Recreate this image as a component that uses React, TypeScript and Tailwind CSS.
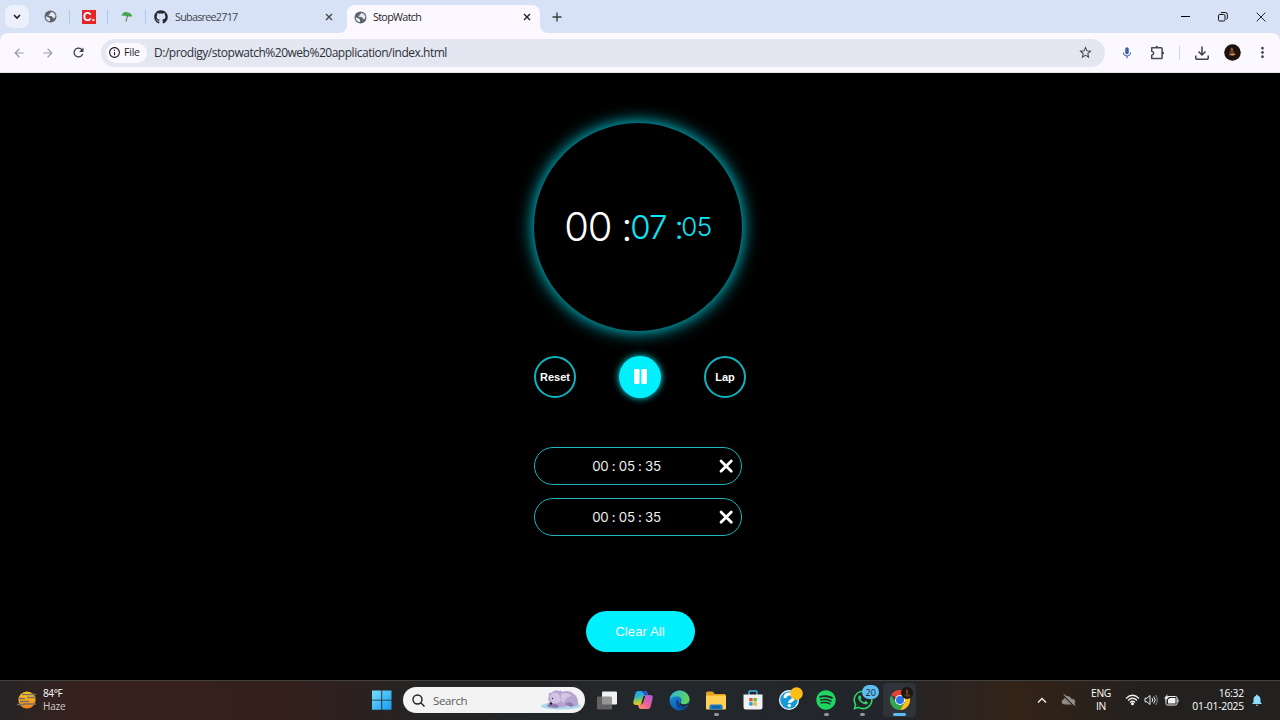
import type { ReactNode } from "react";
import { FaGithub, FaSpotify, FaWhatsapp } from "react-icons/fa6";
import {
  MdArrowBack,
  MdArrowForward,
  MdRefresh,
  MdInfoOutline,
  MdStarOutline,
  MdMic,
  MdMoreVert,
  MdNotifications,
} from "react-icons/md";

function Slot({ className, children }: { className: string; children?: ReactNode }) {
  return <div className={"flex shrink-0 items-center justify-center " + className}>{children}</div>;
}

const Separator = () => <div className="h-3.5 w-px shrink-0 bg-[#a8c7fa]" />;

function CloseMark({ color }: { color: string }) {
  return (
    <svg width="8" height="8" viewBox="0 0 8 8" stroke={color} strokeWidth="1.4">
      <path d="M1 1l6 6M7 1L1 7" />
    </svg>
  );
}

function Globe() {
  return (
    <svg width="13" height="13" viewBox="0 0 13 13">
      <circle cx="6.500" cy="6.500" r="6" fill="#5f6368" />
      <path d="M7.500 1.700q-.3 1.300-1.500 1.500-.2 1.500-1.600 1.800.2 1 1.400 1h1.700q.9.200 1 1.300 1.300.2 1.300 1.500 1.800-1.300 1.700-3.300Q10.700 2.600 7.500 1.700z" fill="#e3e9f8" />
      <path d="M1.600 6.500q2 .2 3 1.100 1.200.3 1.500 1.400-.2 1-.1 2.300-4-.5-4.400-4.800z" fill="#e3e9f8" />
    </svg>
  );
}

function Umbrella() {
  return (
    <svg width="12" height="12" viewBox="0 0 12 12">
      <path d="M.5 5C1.5 1.5 4 .8 6 1.2c3 .3 5 2.3 5.500 4.800-1-.9-2-.9-3-.1-1-1-2.300-1.200-3.500-.4C3.700 4.300 2 4.200.5 5z" fill="#43a547" />
      <path d="M6.500 5L5 10.500" stroke="#65705f" strokeWidth="1" />
    </svg>
  );
}

function TabStrip() {
  return (
    <div className="flex h-[33px] items-center bg-[#d8e2f6] text-[#1f1f1f]">
      <div className="ml-[5px] flex h-[23px] w-6 shrink-0 items-center justify-center rounded-lg bg-[#ebf0fc]">
        <svg width="8" height="6" viewBox="0 0 8 6" fill="none" stroke="#1f1f1f" strokeWidth="1.6">
          <path d="M1 1l3 3 3-3" />
        </svg>
      </div>
      <Slot className="w-[40px] pl-[2px]"><Globe /></Slot>
      <Separator />
      <Slot className="w-[37px] pl-px">
        <div className="flex size-3.5 items-center justify-center bg-[#e3262b] pt-px font-['Liberation_Sans',sans-serif] text-[12px] leading-none font-bold text-white">C.</div>
      </Slot>
      <Separator />
      <Slot className="w-[37px]"><Umbrella /></Slot>
      <Separator />
      <Slot className="w-[29px] pl-px"><FaGithub size={14} color="#24292f" /></Slot>
      <div className="w-[147px] pt-px text-[10.800px] tracking-[-0.750px] text-[#41464d]">Subasree2717</div>
      <Slot className="w-[13px]"><CloseMark color="#474747" /></Slot>
      <div className="flex w-[217px] self-stretch">
        <div className="w-3 bg-[#fbf9ff]"><div className="h-full rounded-br-lg bg-[#d8e2f6]" /></div>
        <div className="mt-[5px] flex w-[193px] items-center rounded-t-lg bg-[#fbf9ff] pb-1">
          <Slot className="w-[26px]"><Globe /></Slot>
          <div className="w-[147px] pt-px text-[10.800px] tracking-[-0.700px]">StopWatch</div>
          <Slot className="w-3.5"><CloseMark color="#1f1f1f" /></Slot>
        </div>
        <div className="w-3 bg-[#fbf9ff]"><div className="h-full rounded-bl-lg bg-[#d8e2f6]" /></div>
      </div>
      <Slot className="w-[10px]">
        <svg width="10" height="10" viewBox="0 0 10 10" stroke="#3c4043" strokeWidth="1.4"><path d="M5 .5v9M.5 5h9" /></svg>
      </Slot>
      <div className="ml-auto flex w-[114px] items-center">
        <Slot className="w-[38px]"><div className="h-px w-[9px] bg-black" /></Slot>
        <Slot className="w-[38px]">
          <svg width="10" height="10" viewBox="0 0 10 10" fill="none" stroke="#111" strokeWidth="1"><rect x=".5" y="2.500" width="6.500" height="6.500" rx="1.300" /><path d="M2.500 1.200Q2.800.5 4 .5h3.500Q9.300.5 9.300 2.300V6q0 1.100-.8 1.500" /></svg>
        </Slot>
        <Slot className="w-[38px]">
          <svg width="10" height="10" viewBox="0 0 10 10" stroke="#111" strokeWidth=".9"><path d="M.7.7l8.600 8.600M9.300.7L.7 9.300" /></svg>
        </Slot>
      </div>
    </div>
  );
}

function Toolbar() {
  return (
    <div className="bg-[#d8e2f6]">
      <div className="flex h-10 items-center rounded-t-lg border-b border-[#e3e2e9] bg-[#fbf9ff]">
        <Slot className="ml-1 w-[29px]"><MdArrowBack size={14} color="#9a9ba3" /></Slot>
        <Slot className="w-[30px]"><MdArrowForward size={14} color="#9a9ba3" /></Slot>
        <Slot className="w-[30px]"><MdRefresh size={15} color="#3c4048" /></Slot>
        <div className="ml-2 flex h-7 w-[1004px] items-center rounded-full bg-[#e4e7f2] px-[5px]">
          <div className="flex h-5 w-[41px] items-center gap-[3px] rounded-full bg-[#fbf9ff] pl-[2px] text-[10.500px] tracking-[-0.2px] text-[#1f1f1f]">
            <MdInfoOutline size={13} />
            <span>File</span>
          </div>
          <div className="ml-[7px] pt-px text-[12px] tracking-[-0.480px] whitespace-nowrap text-[#2b2f36]">
            D:/prodigy/stopwatch%20web%20application/index.html
          </div>
          <div className="ml-auto pr-[7px]"><MdStarOutline size={15} color="#3c4048" /></div>
        </div>
        <Slot className="ml-[7px] w-[30px]"><MdMic size={14} color="#3a5fa8" /></Slot>
        <Slot className="w-[31px]">
          <svg width="15" height="15" viewBox="0 0 15 15" fill="none" stroke="#474b54" strokeWidth="1.500" strokeLinejoin="round">
            <path d="M1.700 2.700h9.600q.8 0 .8.8v9.300q0 .8-.8.8H1.700v-3.400q2-.4 2-2t-2-2z" />
            <path d="M5.600 2.500a1.200 1.200 0 012.400 0zM12.300 6.800a1.200 1.200 0 010 2.500z" fill="#474b54" strokeWidth=".9" />
          </svg>
        </Slot>
        <Slot className="w-3"><div className="h-3.5 w-px bg-[#cbd5e8]" /></Slot>
        <Slot className="w-[34px]">
          <svg width="14" height="14" viewBox="0 0 14 14" fill="none" stroke="#3c4048" strokeWidth="1.500">
            <path d="M7 .5v8M3.500 5.500L7 9l3.500-3.500M.8 9.500v2.800q0 .9.9.9h10.600q.9 0 .9-.9V9.500" />
          </svg>
        </Slot>
        <Slot className="w-[26px]">
          <svg width="17" height="17" viewBox="0 0 17 17">
            <circle cx="8.500" cy="8.500" r="8.300" fill="#1d1210" />
            <path d="M7 3.500l2 .5.3 3 2.500 3-1 1.500H5l.5-3z" fill="#6b3a1e" />
            <path d="M7.500 4l1 1-.5 2.500zM5 10.500l4-1 2.500 1-3 1z" fill="#d99a56" />
          </svg>
        </Slot>
        <Slot className="w-[34px]"><MdMoreVert size={17} color="#474b54" /></Slot>
      </div>
    </div>
  );
}

function Lap({ time }: { time: string }) {
  return (
    <div className="flex h-[38px] w-[208px] items-center rounded-full border border-[#1fb4bd]">
      <div className="w-[183px] pt-[2px] text-center font-['Inter',sans-serif] text-[13.300px] tracking-[-0.300px] text-[#f0f0f0]">{time}</div>
      <svg width="16" height="16" viewBox="0 0 16 16" className="shrink-0" stroke="#fff" strokeWidth="2.800" strokeLinecap="round">
        <path d="M3 3l10.300 10.300M13.300 3L3 13.300" />
      </svg>
    </div>
  );
}

function StopWatch() {
  return (
    <main className="flex h-[607px] flex-col items-center bg-black font-['Liberation_Sans',sans-serif] text-white">
      <div className="mt-[50px] flex w-[212px] flex-col">
        <div className="flex size-[208px] items-center justify-center rounded-full bg-black font-['Inter',sans-serif] leading-none font-light shadow-[0_0_17px_#00edff]">
          <span className="w-[66px] text-[40px] tracking-[-1.200px] whitespace-pre">00 :</span>
          <span className="w-[51px] text-[33px] tracking-[-1.100px] whitespace-pre text-[#0ee6f7]">07 :</span>
          <span className="text-[26px] tracking-[-0.500px] text-[#0ee6f7]">05</span>
        </div>
        <div className="mt-[25px] flex h-[42px] justify-between text-[11px] font-bold">
          <button className="size-[42px] rounded-full border-2 border-[#10b4bd]">Reset</button>
          <button className="flex size-[42px] items-center justify-center rounded-full bg-[#00f0ff] pb-px shadow-[0_0_7px_#00f0ff]">
            <svg width="13" height="15" viewBox="0 0 13 15" fill="#fff"><rect width="5.500" height="15" rx="1.200" /><rect x="7.500" width="5.500" height="15" rx="1.200" /></svg>
          </button>
          <button className="size-[42px] rounded-full border-2 border-[#10b4bd]">Lap</button>
        </div>
        <div className="mt-[49px] flex flex-col gap-[13px]">
          <Lap time="00 : 05 : 35" />
          <Lap time="00 : 05 : 35" />
        </div>
      </div>
      <button className="mt-[75px] h-[41px] w-[109px] rounded-full bg-[#00f0ff] text-[13.300px]">Clear All</button>
    </main>
  );
}

function HazeSun() {
  return (
    <svg width="20" height="20" viewBox="0 0 20 20">
      <defs><linearGradient id="sun" x2="0" y2="1"><stop stopColor="#ffd019" /><stop offset="1" stopColor="#ee7d1b" /></linearGradient></defs>
      <circle cx="10" cy="10" r="8.600" fill="url(#sun)" />
      <path d="M5 4.500h14M1 8.500h7M10 7.500h9M3 11.500h9M0 14.500h7M7 14h12" stroke="#77716a" strokeWidth="1.300" />
    </svg>
  );
}

function Bear() {
  return (
    <svg width="42" height="20" viewBox="0 0 42 20">
      <ellipse cx="21" cy="16" rx="20" ry="3.500" fill="#add9f0" />
      <path d="M9 6q-1-4 2-3 4-4 8-2 3-1 3 1 7-3 12 2 5 4 4 11-4 3-11 1-9 3-18 0-3-2 1-4Q7 11 9 6z" fill="#b7a4d0" />
      <path d="M11 4q4-3 8 0l2 7q-4 3-9 2-3-3-1-9z" fill="#d3c4e3" />
      <path d="M21 4q7-3 11 2-6 0-8 7-4-2-3-9z" fill="#d3c4e3" />
      <path d="M7 15q8-3 12 1l-2 2-9-1zM25 14q5-4 9 1l-3 2z" fill="#907aae" />
      <circle cx="11" cy="13.500" r="1.200" fill="#252033" />
      <circle cx="12.500" cy="8.500" r=".7" fill="#252033" />
    </svg>
  );
}

function Copilot() {
  return (
    <svg width="20" height="20" viewBox="0 0 20 20">
      <defs>
        <linearGradient id="cpa" x1="0" y1="0" x2=".2" y2="1"><stop stopColor="#1f9cee" /><stop offset=".45" stopColor="#2fb6c5" /><stop offset=".75" stopColor="#9acb48" /><stop offset="1" stopColor="#f3c22c" /></linearGradient>
        <linearGradient id="cpb" x1="1" y1="0" x2="0" y2="1"><stop stopColor="#a55be8" /><stop offset=".5" stopColor="#ea5f9d" /><stop offset="1" stopColor="#ff9a57" /></linearGradient>
      </defs>
      <path d="M5 1h7q2 0 2.500 2l.5 2h-2q-1.500 0-2 1.500L9 13q-.6 2-2.600 2H3q-3.500 0-2.500-4l2-8Q3 1 5 1z" fill="url(#cpa)" />
      <path d="M15 19H8q-2 0-2.500-2L5 15h2q1.500 0 2-1.500L11 7q.6-2 2.600-2H17q3.500 0 2.500 4l-2 8q-.5 2-2.500 2z" fill="url(#cpb)" />
      <path d="M8.500 1H12q2 0 2.500 2l.5 2h-2.500q-1.500 0-2-1.500z" fill="#2755ca" />
      <path d="M8.200 13.500l2.400-7.500h1.600L9.800 13.500z" fill="#24252b" />
    </svg>
  );
}

function Edge() {
  return (
    <svg width="21" height="21" viewBox="0 0 21 21">
      <defs>
        <linearGradient id="eda" x2="1" y2=".3"><stop stopColor="#2bb5e9" /><stop offset="1" stopColor="#60d35a" /></linearGradient>
        <linearGradient id="edb" x2=".5" y2="1"><stop stopColor="#1c9be0" /><stop offset="1" stopColor="#0b57ad" /></linearGradient>
      </defs>
      <circle cx="10.500" cy="10.500" r="10" fill="url(#edb)" />
      <path d="M.6 9.500C1.500 4 5.700.5 10.500.5c6 0 10 4.500 10 9 0 3-2.400 4.800-5.500 4.800-2.500 0-3.600-1-3-2 1.500-2.800 0-6-4-6C4.500 6.300 1.500 8 .6 9.500z" fill="url(#eda)" />
      <path d="M8 9q-3 6 3 9.500 4 1.500 7.500-1.700-4.500 1.500-7-.8Q9 14 9.500 11z" fill="#123f86" />
      <path d="M12 12.200q-1 2.600 4 2.200 2-.2 3.600-1.500-1 3-3.500 3.700-4.300.8-5.700-3z" fill="#24282d" />
    </svg>
  );
}

function Explorer() {
  return (
    <svg width="20" height="19" viewBox="0 0 20 19">
      <path d="M0 2q0-1.500 1.500-1.500h5L9 3h9.500Q20 3 20 4.500V7H0z" fill="#e2a21e" />
      <rect y="4.500" width="20" height="14" rx="1.300" fill="#ffd055" />
      <path d="M3.500 18.500V15q0-1.500 1.500-1.500h10q1.500 0 1.500 1.500v3.500z" fill="#1579c5" />
      <path d="M6 16h8" stroke="#095590" strokeWidth="1.200" />
    </svg>
  );
}

function Store() {
  return (
    <svg width="20" height="20" viewBox="0 0 20 20">
      <path d="M6 5V2q0-1 1-1h6q1 0 1 1v3" fill="none" stroke="#44b5ed" strokeWidth="1.400" />
      <path d="M.5 4.500h19V17q0 2.500-2.500 2.500H3Q.5 19.500.5 17z" fill="#f0f1f4" />
      <path d="M6.200 8h3.400v3.400H6.200z" fill="#e75032" /><path d="M10.400 8h3.400v3.400h-3.400z" fill="#7bb52a" />
      <path d="M6.200 12.200h3.400v3.400H6.200z" fill="#1c9fe7" /><path d="M10.400 12.200h3.400v3.400h-3.400z" fill="#f6b51c" />
    </svg>
  );
}

function Help() {
  return (
    <svg width="26" height="26" viewBox="0 0 26 26">
      <circle cx="12" cy="14" r="10" fill="#fff" /><circle cx="12" cy="14" r="8.800" fill="#159bd9" />
      <path d="M8 12q0-4 4-4 4.500 0 4.500 3.500 0 2-2.500 3.300-1.500.7-1.500 2.200" fill="none" stroke="#fff" strokeWidth="3" />
      <circle cx="12.300" cy="19.600" r="1.700" fill="#fff" />
      <circle cx="19.500" cy="7.500" r="6.300" fill="#fdbd16" />
    </svg>
  );
}

function Chrome() {
  return (
    <svg width="24" height="24" viewBox="0 0 24 24">
      <path d="M11 13L2.300 8A10 10 0 0119.700 8z" fill="#e94235" />
      <path d="M11 13v10A10 10 0 012.300 8l5 8z" fill="#31a552" />
      <path d="M11 23l4.300-7.500L11 13l-4 2.500z" fill="#31a552" />
      <path d="M11 23l4.700-7.700L11 8h8.700a10 10 0 01-8.700 15z" fill="#fbc116" />
      <circle cx="11" cy="13" r="5" fill="#fff" /><circle cx="11" cy="13" r="4" fill="#2873e8" />
      <circle cx="18" cy="6" r="6" fill="#1b1513" />
      <path d="M17 2l2 1v3l3 3-2 1-5-1 2-2z" fill="#5a331e" /><path d="M17.500 3l1 1-.5 2z" fill="#c78951" />
    </svg>
  );
}

function TaskIcon({ children, running = false, active = false }: { children: ReactNode; running?: boolean; active?: boolean }) {
  return (
    <div className={"relative flex h-[34px] w-[33px] shrink-0 items-center justify-center rounded " + (active ? "bg-[#30343a]" : "")}>
      {children}
      {running && <div className="absolute bottom-px h-[3px] w-[5px] rounded-full bg-[#929497]" />}
      {active && <div className="absolute bottom-px h-[3px] w-[13px] rounded-full bg-[#5bbdf2]" />}
    </div>
  );
}

function Tray() {
  return (
    <div className="ml-auto flex items-center text-[10.300px] leading-[13px] text-white">
      <Slot className="w-3.5">
        <svg width="10" height="7" viewBox="0 0 10 7" fill="none" stroke="#eee" strokeWidth="1.400"><path d="M1 5.500l4-4 4 4" /></svg>
      </Slot>
      <Slot className="w-[40px] pr-px">
        <svg width="15" height="12" viewBox="0 0 15 12"><path d="M4 10.500Q.7 10.500.7 7.800.7 5.500 3 5q.8-3 3.700-3 2.800 0 3.700 2.700 3.700.1 3.900 3 0 2.800-3 2.800z" fill="#8d8984" /><path d="M2 .5l11 11" stroke="#302721" strokeWidth="2" /><path d="M3 .5l11 11" stroke="#d8d6d3" /></svg>
      </Slot>
      <div className="w-6 text-center tracking-[-0.300px]"><div>ENG</div><div>IN</div></div>
      <Slot className="ml-2.5 w-[18px]">
        <svg width="15" height="12" viewBox="0 0 15 12" fill="none" stroke="#f1f1f1" strokeWidth="1.200"><path d="M1 4.500q6.500-6.500 13 0M3 6.500q4.500-4.500 9 0M5 8.500q2.500-2.500 5 0" /><circle cx="7.500" cy="9.700" r=".9" fill="#fff" /></svg>
      </Slot>
      <Slot className="w-5">
        <svg width="14" height="12" viewBox="0 0 14 12" fill="none" stroke="#efefef" strokeWidth="1"><path d="M1 4.200h2L6 1.500v9L3 7.800H1zM8 4q1.500 2 0 4M9.700 2.500q3 3.500 0 7" /><path d="M11.500 1q3.500 5 0 10" stroke="#888" /></svg>
      </Slot>
      <Slot className="w-[21px]">
        <svg width="15" height="12" viewBox="0 0 15 12"><rect x="2" y="2.500" width="11" height="8.500" rx="1.500" fill="none" stroke="#eee" /><path d="M4 5.500l2-1.500h5.500v5.500H4z" fill="#f3f3f3" /><path d="M13.500 5.300h1v3h-1zM3.500 0L0 4.500h2L1.200 7 5 3H3z" fill="#eee" /></svg>
      </Slot>
      <div className="w-[62px] text-right tracking-[-0.200px] whitespace-nowrap"><div>16:32</div><div>01-01-2025</div></div>
      <Slot className="mr-4 ml-1.5 w-[14px]"><MdNotifications size={16} color="#8fdcff" /></Slot>
    </div>
  );
}

function Taskbar() {
  return (
    <div className="flex h-10 items-center border-t border-[#444240] bg-[linear-gradient(90deg,#272425_0,#38211c_90px,#33201b_280px,#2b2120_360px,#252525_430px,#23272c_700px,#222529_880px,#322318_1010px,#302218_1050px,#222120_1150px,#222120_100%)] pb-px">
      <Slot className="ml-[17px] w-5"><HazeSun /></Slot>
      <div className="ml-1.5 w-[328px] pb-px text-[10px] leading-[13px] text-white">
        <div className="tracking-[-0.400px]">84°F</div>
        <div className="tracking-[-0.200px] text-[#d0cbc9]">Haze</div>
      </div>
      <svg width="21" height="20" viewBox="0 0 21 20" className="shrink-0">
        <defs><linearGradient id="win" x2="1" y2="1"><stop stopColor="#75dfff" /><stop offset="1" stopColor="#139af0" /></linearGradient></defs>
        <path d="M1 .5h9.300v9.200H1zM11.200.5h9.300v9.200h-9.300zM1 10.600h9.300v9.200H1zM11.200 10.600h9.300v9.200h-9.300z" fill="url(#win)" />
      </svg>
      <div className="ml-[11px] flex h-[26px] w-[182px] items-center rounded-full bg-[#f3f3f3] pr-[3px] pl-[9px]">
        <svg width="13" height="13" viewBox="0 0 13 13" fill="none" stroke="#202020" strokeWidth="1.400"><circle cx="5.500" cy="5.500" r="4.500" /><path d="M8.800 8.800l3.700 3.700" /></svg>
        <span className="ml-2 pt-px text-[11.500px] tracking-[-0.350px] text-[#5c5c5c]">Search</span>
        <div className="ml-auto"><Bear /></div>
      </div>
      <div className="ml-[5px] flex items-center gap-[3.600px]">
        <TaskIcon>
          <svg width="20" height="19" viewBox="0 0 20 19"><rect x="5" y=".5" width="15" height="13" rx="1" fill="#f1f1f1" /><rect y="5.500" width="15" height="13" rx="1" fill="#777" fillOpacity=".75" /></svg>
        </TaskIcon>
        <TaskIcon><Copilot /></TaskIcon>
        <TaskIcon><Edge /></TaskIcon>
        <TaskIcon running><Explorer /></TaskIcon>
        <TaskIcon><Store /></TaskIcon>
        <TaskIcon><div className="pb-[2px] pl-[2px]"><Help /></div></TaskIcon>
        <TaskIcon running><FaSpotify size={20} color="#1ed760" /></TaskIcon>
        <TaskIcon running>
          <FaWhatsapp size={22} color="#2bd567" />
          <div className="absolute top-[2px] right-0 flex h-[14px] w-[17px] items-center justify-center rounded-full bg-[#5ebdf2] text-[9px] leading-none text-[#17212b]">20</div>
        </TaskIcon>
        <TaskIcon active><div className="pb-0.5 pl-1"><Chrome /></div></TaskIcon>
      </div>
      <Tray />
    </div>
  );
}

export default function App() {
  return (
    <div className="h-[720px] w-[1280px] overflow-hidden bg-black font-['Open_Sans','Noto_Sans',sans-serif]">
      <TabStrip />
      <Toolbar />
      <StopWatch />
      <Taskbar />
    </div>
  );
}
